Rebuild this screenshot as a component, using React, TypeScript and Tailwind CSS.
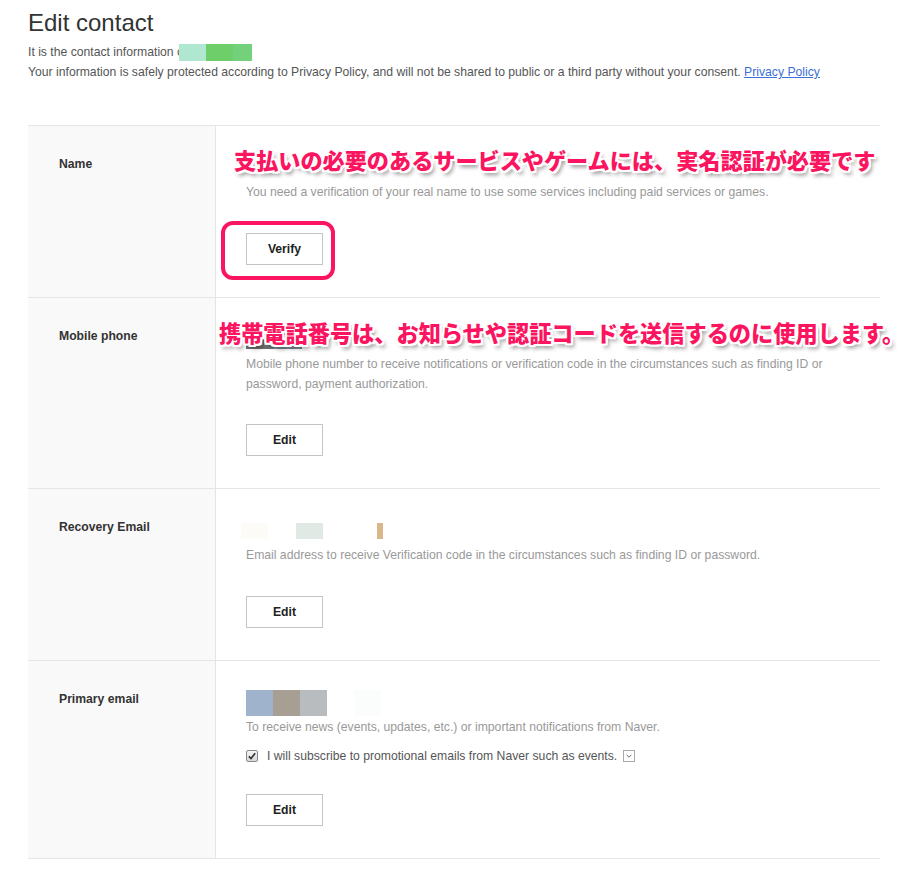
import type { ReactNode } from 'react';

const jpShadow =
    '[text-shadow:2px_0_0_#fff,-2px_0_0_#fff,0_2px_0_#fff,0_-2px_0_#fff,2px_2px_0_#fff,-2px_-2px_0_#fff,2px_-2px_0_#fff,-2px_2px_0_#fff,3px_4px_4px_rgba(0,0,0,0.45)]';

// masked value pixels (personal info hidden as coloured blocks)
const Pixels = ({ blocks }: { blocks: { w: number; c: string; gap?: number; h?: number }[] }) => (
    <div className="flex items-center h-[28px]">
        {blocks.map((b, i) => (
            <div key={i} style={{ width: b.w, height: b.h ?? 16, background: b.c, marginLeft: b.gap ?? 0 }} />
        ))}
    </div>
);

const Button = ({ children }: { children: ReactNode }) => (
    <button className="w-[77px] h-[32px] border border-[#c4c4c4] bg-white text-[12.2px] font-bold text-[#222] leading-none">
        {children}
    </button>
);

interface RowProps {
    label: string;
    children: ReactNode;
}

const Row = ({ label, children }: RowProps) => (
    <div className="flex border-b border-[#e5e5e5]">
        <div className="w-[188px] shrink-0 bg-[#f9f9f9] border-r border-[#e5e5e5] pl-[31px] pt-[30px] text-[12.2px] leading-[16px] font-bold text-[#333]">
            {label}
        </div>
        <div className="relative flex-1 pl-[30px] pt-[28px] pb-[32px]">{children}</div>
    </div>
);

const Desc = ({ children }: { children: ReactNode }) => (
    <p className="text-[12.2px] leading-[20px] text-[#999] pr-[40px]">{children}</p>
);

export default function App() {
    return (
        <div className="min-h-screen bg-white font-['Liberation_Sans',Arial,sans-serif] text-[#333]">
            <div className="ml-[28px] w-[852px]">
                <h1 className="pt-[9px] text-[24px] leading-[28px] text-[#333]">Edit contact</h1>
                <div className="mt-[5px] text-[12.2px] leading-[20px] text-[#555]">
                    <div className="flex items-center">
                        <span>It is the contact information o</span>
                        <div className="flex -ml-[5px]">
                            <div className="w-[27px] h-[17px] bg-[#b0e7d1]" />
                            <div className="w-[27px] h-[17px] bg-[#6ecf6a]" />
                            <div className="w-[19px] h-[17px] bg-[#74d17b]" />
                        </div>
                    </div>
                    <div>
                        Your information is safely protected according to Privacy Policy, and will not be shared to public or a
                        third party without your consent.{' '}
                        <a className="text-[#3c6fd7] underline">Privacy Policy</a>
                    </div>
                </div>

                <div className="mt-[43px] border-t border-[#e5e5e5]">
                    <Row label="Name">
                        <div className="h-[28px]" />
                        <Desc>You need a verification of your real name to use some services including paid services or games.</Desc>
                        <div className="mt-[31px]">
                            <Button>Verify</Button>
                        </div>
                        <div className="absolute left-[5px] top-[95px] w-[114px] h-[59px] border-[4px] border-[#fb1560] rounded-[12px]" />
                        <div
                            className={`absolute left-[18px] top-[18px] whitespace-nowrap font-['Noto_Sans_CJK_JP',sans-serif] font-black text-[22.15px] leading-[30px] text-[#fb1560] ${jpShadow}`}
                        >
                            支払いの必要のあるサービスやゲームには、実名認証が必要です
                        </div>
                    </Row>

                    <Row label="Mobile phone">
                        <Pixels
                            blocks={[
                                { w: 28, c: '#6d6f71', h: 18 },
                                { w: 28, c: '#7d8a98', h: 18 },
                            ]}
                        />
                        <Desc>
                            Mobile phone number to receive notifications or verification code in the circumstances such as finding ID or
                            password, payment authorization.
                        </Desc>
                        <div className="mt-[30px]">
                            <Button>Edit</Button>
                        </div>
                        <div
                            className={`absolute left-[3px] top-[19px] whitespace-nowrap font-['Noto_Sans_CJK_JP',sans-serif] font-black text-[22.2px] leading-[30px] text-[#fb1560] ${jpShadow}`}
                        >
                            携帯電話番号は、お知らせや認証コードを送信するのに使用します。
                        </div>
                    </Row>

                    <Row label="Recovery Email">
                        <Pixels
                            blocks={[
                                { w: 27, c: '#fcfbf7', gap: -5 },
                                { w: 27, c: '#e0e9e4', gap: 28 },
                                { w: 6, c: '#d9b78a', gap: 54 },
                            ]}
                        />
                        <Desc>Email address to receive Verification code in the circumstances such as finding ID or password.</Desc>
                        <div className="mt-[31px]">
                            <Button>Edit</Button>
                        </div>
                    </Row>

                    <Row label="Primary email">
                        <Pixels
                            blocks={[
                                { w: 27, c: '#9fb4cc', h: 26 },
                                { w: 27, c: '#a89f94', h: 26 },
                                { w: 27, c: '#b9bcbe', h: 26 },
                                { w: 27, c: '#fbfcfc', h: 26, gap: 27 },
                            ]}
                        />
                        <Desc>To receive news (events, updates, etc.) or important notifications from Naver.</Desc>
                        <div className="mt-[9px] h-[20px] flex items-center text-[12.2px] text-[#555]">
                            <span className="w-[12px] h-[12px] rounded-[2px] border border-[#8a8a8a] bg-gradient-to-b from-[#f4f4f4] to-[#d8d8d8] flex items-center justify-center">
                                <svg viewBox="0 0 12 12" className="w-[10px] h-[10px]">
                                    <path d="M2.2 6.4 L4.8 9 L9.8 2.8" fill="none" stroke="#333" strokeWidth="2" />
                                </svg>
                            </span>
                            <span className="ml-[9px]">I will subscribe to promotional emails from Naver such as events.</span>
                            <span className="ml-[6px] w-[12px] h-[12px] border border-[#aaa] bg-white flex items-center justify-center">
                                <svg viewBox="0 0 10 10" className="w-[8px] h-[8px]">
                                    <path d="M2 3.5 L5 6.5 L8 3.5" fill="none" stroke="#666" strokeWidth="1.2" />
                                </svg>
                            </span>
                        </div>
                        <div className="mt-[28px]">
                            <Button>Edit</Button>
                        </div>
                    </Row>
                </div>
            </div>
        </div>
    );
}
